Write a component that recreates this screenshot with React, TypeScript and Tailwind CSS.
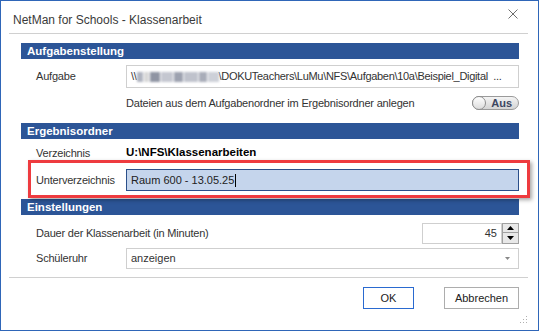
import { ReactNode } from 'react'

const font = { fontFamily: '"Liberation Sans", Arial, sans-serif' }

function SectionHeader({ title, className = '' }: { title: string; className?: string }) {
    return (
        <div className={`h-[16px] bg-[#2c5597] text-white font-bold text-[11.5px] leading-[16px] pl-[6px] ${className}`}>
            {title}
        </div>
    )
}

function Row({ label, children, className = '' }: { label: string; children: ReactNode; className?: string }) {
    return (
        <div className={`flex items-center ${className}`}>
            <div className="w-[105px] pl-[15px] shrink-0 text-[#333] text-[11px] tracking-[-0.2px]">{label}</div>
            <div className="flex-1 min-w-0 h-full">{children}</div>
        </div>
    )
}

export default function App() {
    return (
        <div className="relative w-[539px] h-[331px] bg-white border border-[#2f66b8] text-[#222]" style={font}>
            {/* title bar */}
            <div className="h-[32px] pt-[6px] flex items-center justify-between pl-[12px] pr-[20px]">
                <span className="text-[12px] text-[#3a3a3a]">NetMan for Schools - Klassenarbeit</span>
                <svg width="10" height="10" viewBox="0 0 10 10" className="mt-[-12px]">
                    <path d="M0.5 0.5 L9.5 9.5 M9.5 0.5 L0.5 9.5" stroke="#6e6e6e" strokeWidth="1" />
                </svg>
            </div>
            <div className="ml-[8px] mr-[10px] h-px bg-[#d0d0d0]" />

            <div className="pl-[20px] pr-[19px]">
                <SectionHeader title="Aufgabenstellung" className="mt-[9px]" />
                <Row label="Aufgabe" className="mt-[6px] h-[23px]">
                    <div className="h-full border border-[#cfcfcf] flex items-center pl-[4px] text-[11px] tracking-[-0.3px] text-[#333] whitespace-nowrap overflow-hidden">
                        <span>\\</span>
                        <span className="inline-flex h-[10px] w-[82px] blur-[1px] gap-[1px]">
                            <span className="w-[6px] bg-[#b0b4c0]" />
                            <span className="w-[5px] bg-[#d8d8d8]" />
                            <span className="w-[10px] bg-[#8f94a3]" />
                            <span className="w-[12px] bg-[#c4c7d0]" />
                            <span className="w-[9px] bg-[#9da2b0]" />
                            <span className="w-[14px] bg-[#bfc2cc]" />
                            <span className="w-[8px] bg-[#a9adb9]" />
                            <span className="w-[11px] bg-[#cdd0d8]" />
                        </span>
                        <span>\DOKUTeachers\LuMu\NFS\Aufgaben\10a\Beispiel_Digital&nbsp;&nbsp;...</span>
                    </div>
                </Row>
                <div className="mt-[7px] h-[16px] flex items-center justify-between pl-[105px]">
                    <span className="text-[11px] tracking-[-0.2px] text-[#333]">Dateien aus dem Aufgabenordner im Ergebnisordner anlegen</span>
                    <div className="relative w-[47px] h-[14px] rounded-full border border-[#9a9a9a] bg-gradient-to-b from-[#f4f4f4] to-[#d4d4d4] flex items-center justify-end pr-[6px]">
                        <div className="absolute left-[-1px] top-[-1px] w-[14px] h-[14px] rounded-full border border-[#8e8e8e] bg-gradient-to-b from-white to-[#dcdcdc]" />
                        <span className="text-[11px] font-bold text-[#3c4660] leading-none">Aus</span>
                    </div>
                </div>

                <SectionHeader title="Ergebnisordner" className="mt-[12px]" />
                <Row label="Verzeichnis" className="mt-[5px] h-[18px]">
                    <div className="h-full flex items-center font-bold text-[11.5px] text-black">U:\NFS\Klassenarbeiten</div>
                </Row>
                <Row label="Unterverzeichnis" className="mt-[7px] h-[22px]">
                    <div className="h-full border border-[#2b4f8a] bg-[#c5d5ec] flex items-center pl-[4px] text-[11px] text-[#222]">
                        Raum 600 - 13.05.25<span className="w-px h-[13px] bg-black ml-px" />
                    </div>
                </Row>

                <SectionHeader title="Einstellungen" className="mt-[8px]" />
                <div className="mt-[8px] h-[21px] flex items-center">
                    <span className="pl-[15px] text-[11px] tracking-[-0.2px] text-[#333]">Dauer der Klassenarbeit (in Minuten)</span>
                    <div className="ml-auto h-full flex">
                        <div className="w-[80px] h-full border border-[#cfcfcf] flex items-center justify-end pr-[4px] text-[11px] text-[#333]">45</div>
                        <div className="w-[17px] h-full flex flex-col">
                            <div className="h-[10px] border border-[#a0a0a0] bg-[#e8e8e8] flex items-center justify-center">
                                <svg width="7" height="4" viewBox="0 0 7 4"><path d="M0 4 L3.5 0 L7 4 Z" fill="#000" /></svg>
                            </div>
                            <div className="h-[11px] border border-t-0 border-[#a0a0a0] bg-[#e8e8e8] flex items-center justify-center">
                                <svg width="7" height="4" viewBox="0 0 7 4"><path d="M0 0 L3.5 4 L7 0 Z" fill="#000" /></svg>
                            </div>
                        </div>
                    </div>
                </div>
                <Row label="Schüleruhr" className="mt-[4px] h-[21px]">
                    <div className="h-full border border-[#cfcfcf] flex items-center justify-between pl-[4px] pr-[8px] text-[11px] text-[#333]">
                        <span>anzeigen</span>
                        <svg width="5" height="3" viewBox="0 0 5 3"><path d="M0 0 L2.5 3 L5 0 Z" fill="#888" /></svg>
                    </div>
                </Row>
            </div>

            <div className="mt-[8px] ml-[8px] mr-[10px] h-px bg-[#d0d0d0]" />

            <div className="mt-[9px] pr-[19px] flex justify-end gap-[30px] text-[11px] text-[#222]">
                <button className="w-[51px] h-[22px] border border-[#2a6ad0] bg-white">OK</button>
                <button className="w-[75px] h-[22px] border border-[#adadad] bg-white">Abbrechen</button>
            </div>

            {/* resize grip */}
            <svg width="8" height="8" viewBox="0 0 8 8" className="absolute right-[10px] bottom-[6px]">
                <rect x="6" y="0" width="1" height="1" fill="#b0b0b0" />
                <rect x="3" y="3" width="1" height="1" fill="#b0b0b0" />
                <rect x="6" y="3" width="1" height="1" fill="#b0b0b0" />
                <rect x="0" y="6" width="1" height="1" fill="#b0b0b0" />
                <rect x="3" y="6" width="1" height="1" fill="#b0b0b0" />
                <rect x="6" y="6" width="1" height="1" fill="#b0b0b0" />
            </svg>

            {/* red annotation */}
            <div className="absolute left-[27px] top-[159px] w-[502px] h-[38px] border-[3px] border-[#ee3b3f] shadow-[2px_2px_4px_rgba(0,0,0,0.35)]" />
        </div>
    )
}
